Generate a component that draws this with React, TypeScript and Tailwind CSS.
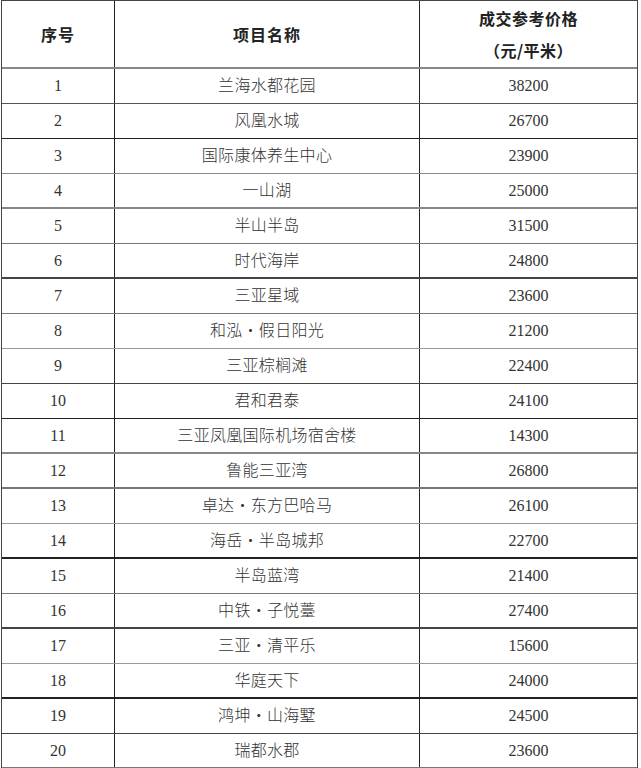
const rows: [string, string, string, string][] = [
  ['1', '兰海水都花园', '38200', 'border-b border-[#555]'],
  ['2', '风凰水城', '26700', 'border-b border-[#222]'],
  ['3', '国际康体养生中心', '23900', 'border-b border-[#888]'],
  ['4', '一山湖', '25000', 'border-b-2 border-[#888]'],
  ['5', '半山半岛', '31500', 'border-b border-[#777]'],
  ['6', '时代海岸', '24800', 'border-b-2 border-[#444]'],
  ['7', '三亚星域', '23600', 'border-b border-[#777]'],
  ['8', '和泓・假日阳光', '21200', 'border-b border-[#999]'],
  ['9', '三亚棕榈滩', '22400', 'border-b border-[#444]'],
  ['10', '君和君泰', '24100', 'border-b border-[#222]'],
  ['11', '三亚凤凰国际机场宿舍楼', '14300', 'border-b-2 border-[#888]'],
  ['12', '鲁能三亚湾', '26800', 'border-b-2 border-[#777]'],
  ['13', '卓达・东方巴哈马', '26100', 'border-b border-[#999]'],
  ['14', '海岳・半岛城邦', '22700', 'border-b-2 border-[#222]'],
  ['15', '半岛蓝湾', '21400', 'border-b border-[#777]'],
  ['16', '中铁・子悦薹', '27400', 'border-b-2 border-[#444]'],
  ['17', '三亚・清平乐', '15600', 'border-b border-[#999]'],
  ['18', '华庭天下', '24000', 'border-b-2 border-[#222]'],
  ['19', '鸿坤・山海墅', '24500', 'border-b border-[#444]'],
  ['20', '瑞都水郡', '23600', 'border-b-2 border-[#777]'],
];

export default function App() {
  return (
    <div className="w-[641px] h-[768px] bg-white overflow-hidden">
      <div className="ml-[1px] w-[637px] border-l border-r border-t border-[#444] text-[#333]">
        <div className="grid grid-cols-[113px_305px_1fr] h-[68px] border-b-2 border-[#888] font-bold text-[16px] text-[#222] [font-family:'Noto_Sans_CJK_SC',sans-serif]">
          <div className="flex items-center justify-center border-r border-[#222] pb-[1px] tracking-[1px]">序号</div>
          <div className="flex items-center justify-center border-r border-[#222] pb-[1px] tracking-[1px]">项目名称</div>
          <div className="flex flex-col items-center justify-center gap-[12px] tracking-[0.5px] leading-[20px]">
            <span>成交参考价格</span>
            <span>（元/平米）</span>
          </div>
        </div>
        {rows.map(([n, name, price, line]) => (
          <div key={n} className={`grid grid-cols-[113px_305px_1fr] h-[35px] ${line}`}>
            <div className="flex items-center justify-center border-r border-[#222] text-[16px] [font-family:'Liberation_Serif',serif]">
              {n}
            </div>
            <div className="flex items-center justify-center border-r border-[#222] text-[16px] tracking-[0.3px] font-light [font-family:'Liberation_Serif','Noto_Sans_CJK_SC',serif]">
              {name}
            </div>
            <div className="flex items-center justify-center text-[16px] [font-family:'Liberation_Serif',serif]">
              {price}
            </div>
          </div>
        ))}
      </div>
    </div>
  );
}
